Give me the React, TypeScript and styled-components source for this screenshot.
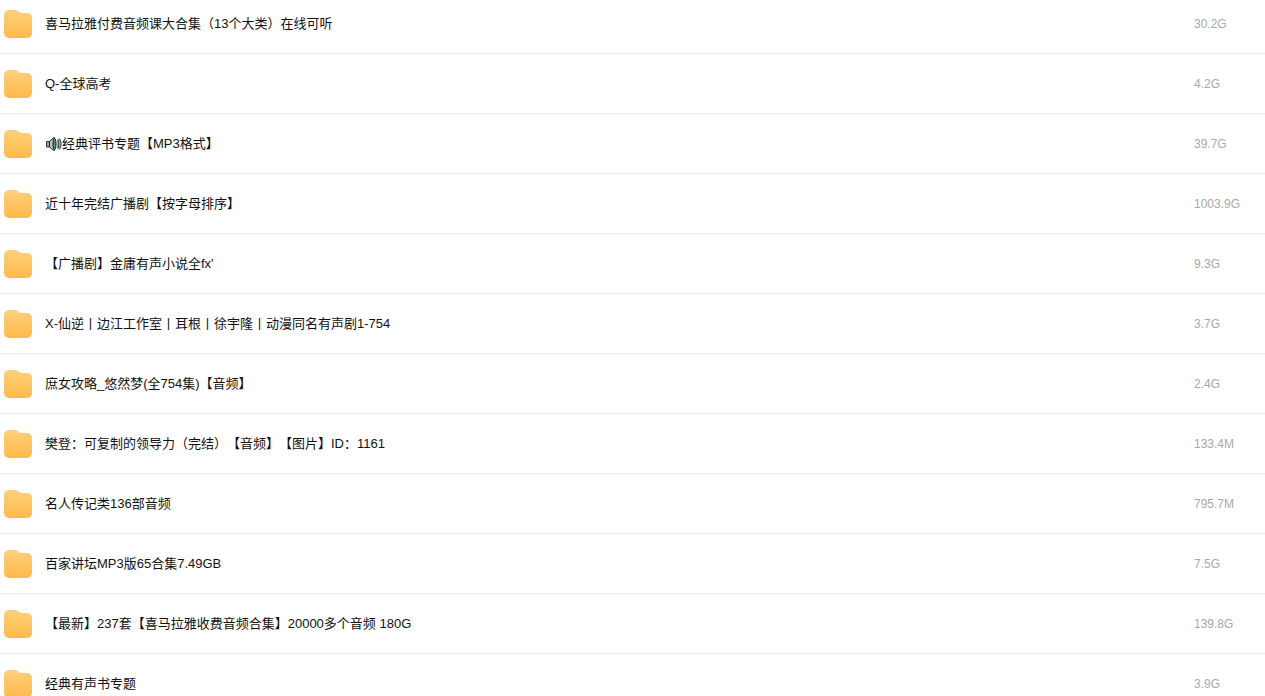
import React from "react";
import styled, { createGlobalStyle } from "styled-components";

const GlobalStyle = createGlobalStyle`
  *, *::before, *::after { box-sizing: border-box; }
  body {
    margin: 0;
    background: #fff;
    font-family: "Liberation Sans", "Noto Sans CJK SC", sans-serif;
    text-spacing-trim: space-all;
  }
`;

const Viewport = styled.main`
  height: 100vh;
  overflow: hidden;
`;

const FileTable = styled.table`
  width: 100%;
  margin-top: -6px;
  table-layout: fixed;
  border-collapse: separate;
  border-spacing: 0;
`;

const Cell = styled.td`
  height: 60px;
  padding: 0 0 0 4px;
  border-bottom: 1px solid #ededed;
  vertical-align: middle;
`;

const SizeCell = styled(Cell)`
  font-size: 12px;
  line-height: 18px;
  color: #a8a8a8;
`;

const FileLink = styled.a`
  display: flex;
  align-items: center;
  gap: 13px;
  color: #111;
  text-decoration: none;
`;

const FileName = styled.span`
  display: flex;
  align-items: center;
  font-size: 13px;
  line-height: 20px;
  white-space: nowrap;
`;

const Glyph = styled.svg`
  display: block;
  flex: none;
`;

const FolderIcon = () => (
  <Glyph width="28" height="28" viewBox="0 0 28 28" aria-hidden="true">
    <defs>
      <linearGradient id="folder" x1="0" y1="0" x2="0" y2="1">
        <stop offset="0" stopColor="#ffd07c" />
        <stop offset="1" stopColor="#ffba4b" />
      </linearGradient>
    </defs>
    <path
      d="M5 0h6.400c.9 0 1.700.3 2.400.9l1.700 1.300c.7.6 1.500.8 2.400.8H23a5 5 0 0 1 5 5v15a5 5 0 0 1-5 5H5a5 5 0 0 1-5-5V5a5 5 0 0 1 5-5z"
      fill="url(#folder)"
    />
  </Glyph>
);

const SpeakerIcon = () => (
  <Glyph width="17" height="14" viewBox="0 0 17 14" role="img" aria-label="🔊">
    <path d="M1.500 4.500h3v5.500h-3z" fill="#9a9a9a" stroke="#333" strokeLinejoin="round" />
    <path d="M4.500 4.300 8.500.8h1v12.600h-1L4.500 10z" fill="#bdbdbd" stroke="#222" strokeLinejoin="round" />
    <ellipse cx="9.500" cy="7" rx="1.500" ry="5.800" fill="#777" stroke="#222" />
    <path d="M11.500 4.500c1 1.500 1 3.500 0 5" fill="none" stroke="#39a9c4" strokeWidth="1.200" />
    <path d="M12.500 2.700c1.900 2.400 1.900 6.200 0 8.600" fill="none" stroke="#15343e" strokeWidth="1.200" />
    <path d="M13.400 2c2.200 2.700 2.200 7.300 0 10" fill="none" stroke="#39a9c4" strokeWidth="1" />
    <path d="M14.200 1.500c2.400 3 2.400 8 0 11" fill="none" stroke="#222" strokeWidth="1" />
  </Glyph>
);

interface FileEntry {
  name: string;
  size: string;
  speaker?: boolean;
}

const files: FileEntry[] = [
  { name: "喜马拉雅付费音频课大合集（13个大类）在线可听", size: "30.2G" },
  { name: "Q-全球高考", size: "4.2G" },
  { name: "经典评书专题【MP3格式】", size: "39.7G", speaker: true },
  { name: "近十年完结广播剧【按字母排序】", size: "1003.9G" },
  { name: "【广播剧】金庸有声小说全fx'", size: "9.3G" },
  { name: "X-仙逆丨边江工作室丨耳根丨徐宇隆丨动漫同名有声剧1-754", size: "3.7G" },
  { name: "庶女攻略_悠然梦(全754集)【音频】", size: "2.4G" },
  { name: "樊登：可复制的领导力（完结）【音频】【图片】ID：1161", size: "133.4M" },
  { name: "名人传记类136部音频", size: "795.7M" },
  { name: "百家讲坛MP3版65合集7.49GB", size: "7.5G" },
  { name: "【最新】237套【喜马拉雅收费音频合集】20000多个音频 180G", size: "139.8G" },
  { name: "经典有声书专题", size: "3.9G" },
];

export default function App() {
  return (
    <Viewport>
      <GlobalStyle />
      <FileTable>
        <colgroup>
          <col />
          <col width="75" />
        </colgroup>
        <tbody>
          {files.map((file) => (
            <tr key={file.name}>
              <Cell>
                <FileLink href="#">
                  <FolderIcon />
                  <FileName>
                    {file.speaker && <SpeakerIcon />}
                    {file.name}
                  </FileName>
                </FileLink>
              </Cell>
              <SizeCell>{file.size}</SizeCell>
            </tr>
          ))}
        </tbody>
      </FileTable>
    </Viewport>
  );
}
